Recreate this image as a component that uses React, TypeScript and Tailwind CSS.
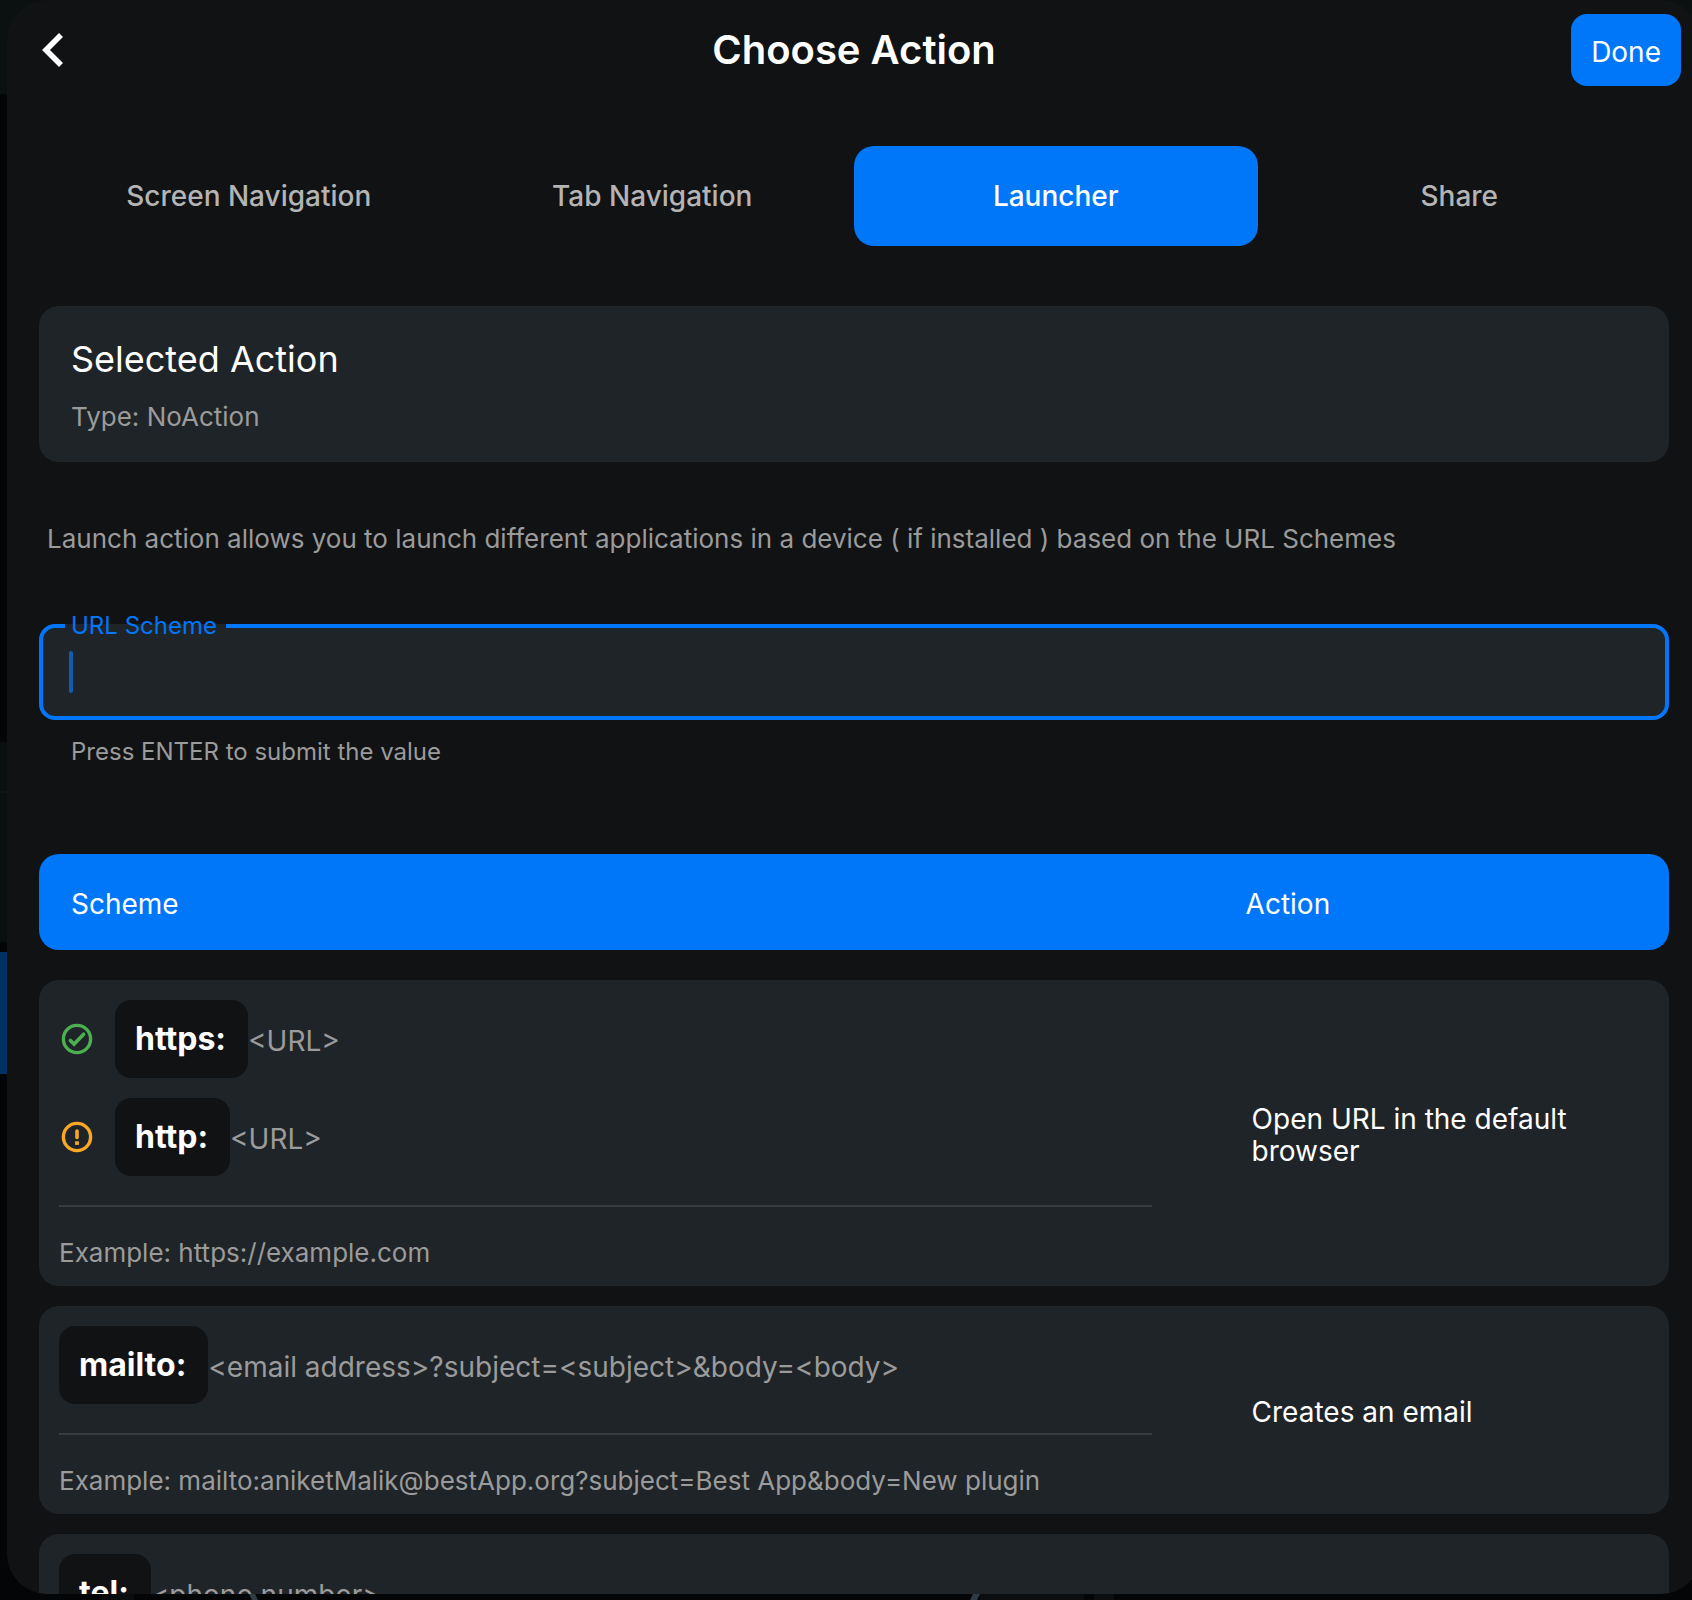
import { useState } from "react";

const tabs = ["Screen Navigation", "Tab Navigation", "Launcher", "Share"];

type Scheme = { name: string; args: string; status?: "ok" | "warn" };
type Row = { schemes: Scheme[]; example: string; action: string };

const rows: Row[] = [
  {
    schemes: [
      { name: "https:", args: "<URL>", status: "ok" },
      { name: "http:", args: "<URL>", status: "warn" },
    ],
    example: "Example: https://example.com",
    action: "Open URL in the default browser",
  },
  {
    schemes: [{ name: "mailto:", args: "<email address>?subject=<subject>&body=<body>" }],
    example: "Example: mailto:aniketMalik@bestApp.org?subject=Best App&body=New plugin",
    action: "Creates an email",
  },
  {
    schemes: [{ name: "tel:", args: "<phone number>" }],
    example: "Example: tel:1-408-555-5555",
    action: "Calls the number",
  },
];

function StatusIcon({ status }: { status: "ok" | "warn" }) {
  return (
    <svg
      viewBox="0 0 36 36"
      className="mr-5 size-9 shrink-0"
      fill="none"
      stroke={status === "ok" ? "#4caf50" : "#f9a825"}
      strokeWidth="3.4"
      role="img"
      aria-label={status === "ok" ? "Recommended" : "Caution"}
    >
      <circle cx="18" cy="18" r="13.6" />
      {status === "ok" ? (
        <path d="M11.4 19.4l3.7 3.7 9.5-9.9" strokeWidth="3.6" strokeLinecap="round" strokeLinejoin="miter" />
      ) : (
        <>
          <path d="M18 12.1v6.4" strokeWidth="3.6" strokeLinecap="round" />
          <path d="M18 22.3v3.6" strokeWidth="3.8" />
        </>
      )}
    </svg>
  );
}

/** Dimmed page that shows around the edges of the sheet. */
function Backdrop() {
  return (
    <div className="absolute inset-0 flex flex-col" aria-hidden="true">
      <div className="h-[94px] bg-[#0b1011]" />
      <div className="h-[648px] bg-[#040506]" />
      <div className="h-[51px] border-b-2 border-[#101516] bg-[#0a0f10]" />
      <div className="h-[149px] bg-[#0a0f10]" />
      <div className="h-[10px] bg-[#040506]" />
      <div className="h-[122px] bg-[#003164]" />
      <div className="flex grow items-end bg-[#040506]">
        <svg viewBox="0 0 1120 6" className="h-1.5 w-[1120px] shrink-0">
          <path d="M102 0h32v6h-32zM980 0h104v6H980zM1094 0h20v6h-20z" fill="#0b0d0e" />
          <path d="M249 0h6l3 6h-6zM973 0h7l-3 6h-7z" fill="#2f3b43" />
        </svg>
      </div>
    </div>
  );
}

export default function App() {
  const [active, setActive] = useState("Launcher");
  const [url, setUrl] = useState("");

  return (
    <div className="relative h-screen overflow-hidden bg-[#040506] pb-1.5 pl-[7px] font-['Inter',sans-serif] text-white">
      <Backdrop />
      <main className="relative -mr-[9px] flex h-full flex-col overflow-hidden rounded-[40px] bg-[#111214]">
        <header className="grid h-[100px] shrink-0 grid-cols-[1fr_auto_1fr] items-center px-5">
          <button type="button" aria-label="Back" className="justify-self-start pl-2">
            <svg viewBox="0 0 36 48" className="h-12 w-9" fill="none" stroke="#fff" strokeWidth="5.6">
              <path d="M26 9L11 24l15 15" strokeLinejoin="miter" />
            </svg>
          </button>
          <h1 className="text-[40px] leading-[48px] font-semibold">Choose Action</h1>
          <button type="button" className="h-[72px] justify-self-end rounded-2xl bg-[#0076f9] px-5 pt-1 text-[28px]">
            Done
          </button>
        </header>

        <nav className="mt-[46px] grid shrink-0 grid-cols-4 px-10">
          {tabs.map((tab) => (
            <button
              key={tab}
              type="button"
              onClick={() => setActive(tab)}
              className={
                tab === active
                  ? "h-[100px] rounded-[20px] bg-[#0076f9] text-[28px] font-medium text-white"
                  : "h-[100px] rounded-[20px] text-[28px] font-medium text-[#b4b4b4]"
              }
            >
              {tab}
            </button>
          ))}
        </nav>

        <section className="mx-8 mt-[60px] h-[156px] shrink-0 rounded-[20px] bg-[#1f2428] px-8 pt-[31px]">
          <h2 className="text-[36px] leading-[44px]">Selected Action</h2>
          <p className="mt-5 text-[26px] leading-8 text-[#9b9b9b]">Type: NoAction</p>
        </section>

        <p className="mx-10 mt-[61px] shrink-0 text-[26px] leading-8 text-[#9b9b9b]">
          Launch action allows you to launch different applications in a device ( if installed ) based on the URL
          Schemes
        </p>

        <div className="mx-8 mt-[55px] shrink-0">
          <div className="relative h-[110px]">
            <div className="absolute inset-x-0 top-[14px] bottom-0 rounded-2xl bg-[#1f2428]" />
            <fieldset className="absolute inset-0 rounded-2xl border-4 border-[#0076f9] pl-[22px]">
              <legend className="pr-[9px] pl-1.5 text-[24px] leading-8 text-[#0076f9]">
                <label htmlFor="url">URL Scheme</label>
              </legend>
            </fieldset>
            <input
              id="url"
              type="text"
              value={url}
              onChange={(e) => setUrl(e.target.value)}
              aria-describedby="url-help"
              className="absolute inset-x-0 top-[18px] bottom-0 bg-transparent px-8 text-[28px] outline-none"
            />
            <span className="absolute top-[41px] left-[30px] h-[42px] w-1 rounded-sm bg-[#0f5cb0]" />
          </div>
          <p id="url-help" className="mt-4 pl-8 text-[24px] leading-8 text-[#9b9b9b]">
            Press ENTER to submit the value
          </p>
        </div>

        <table className="mx-8 mt-[86px] block shrink-0">
          <thead className="block">
            <tr className="grid h-24 grid-cols-[18fr_7fr] items-center rounded-[20px] bg-[#0076f9] pt-1 text-left text-[28px]">
              <th className="pl-8 font-normal">Scheme</th>
              <th className="pl-[33px] font-normal">Action</th>
            </tr>
          </thead>
          <tbody className="mt-[30px] flex flex-col gap-5">
            {rows.map((row) => (
              <tr key={row.action} className="grid grid-cols-[18fr_7fr] rounded-[20px] bg-[#1f2428]">
                <td className="pt-5 pr-[61px] pb-[17px] pl-5">
                  <div className="flex flex-col gap-5">
                    {row.schemes.map((s) => (
                      <div key={s.name} className="flex h-[78px] items-center">
                        {s.status && <StatusIcon status={s.status} />}
                        <b className="flex h-full items-center rounded-2xl bg-[#111214] pr-[22px] pl-5 text-[32px] font-bold">
                          {s.name}
                        </b>
                        <span className="pt-1 text-[28px] text-[#9b9b9b]">{s.args}</span>
                      </div>
                    ))}
                  </div>
                  <hr className="mt-[29px] border-t-2 border-[#383d41]" />
                  <p className="mt-[30px] text-[26px] leading-8 text-[#9b9b9b]">{row.example}</p>
                </td>
                <td className="flex items-center pt-1 pr-20 pl-[39px] text-[28px] leading-8">{row.action}</td>
              </tr>
            ))}
          </tbody>
        </table>
      </main>
    </div>
  );
}
